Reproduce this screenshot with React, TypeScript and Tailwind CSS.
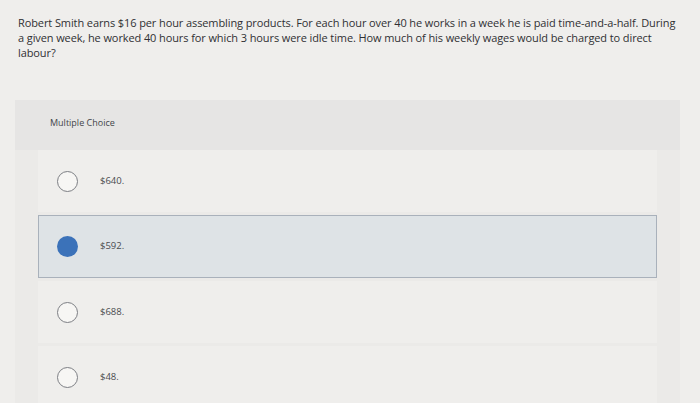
const options = [
  { label: '$640.', selected: false },
  { label: '$592.', selected: true },
  { label: '$688.', selected: false },
  { label: '$48.', selected: false },
]

function Radio({ selected }: { selected: boolean }) {
  if (selected) {
    return <span className="block h-[21px] w-[21px] shrink-0 rounded-full bg-[#3b72b9]" />
  }
  return (
    <span className="block h-[21px] w-[21px] shrink-0 rounded-full border border-[#7d7f84] bg-[#f7f6f4]" />
  )
}

export default function App() {
  return (
    <div
      className="h-[403px] w-[700px] overflow-hidden bg-[#efeeec] text-[#2f3033]"
      style={{ fontFamily: '"Open Sans", "Liberation Sans", sans-serif' }}
    >
      <div className="whitespace-nowrap px-[18px] pt-[15px] text-[11px] leading-[15px] tracking-[-0.1px]">
        Robert Smith earns $16 per hour assembling products. For each hour over 40 he works in a week he is paid
        time-and-a-half. During
        <br />
        a given week, he worked 40 hours for which 3 hours were idle time. How much of his weekly wages would be
        charged to direct
        <br />
        labour?
      </div>

      <div className="ml-[15px] mr-[20px] mt-[40px] bg-[#e6e5e4]">
        <div className="h-[50px] pl-[35px] pt-[16px] text-[9px] text-[#44464a]">Multiple Choice</div>
        <div className="flex flex-col gap-[3px] bg-[#ebeae8] pb-2">
          {options.map((o) => (
            <div
              key={o.label}
              className={
                o.selected
                  ? 'mx-[23px] flex h-[63px] items-center border border-[#a9b1bb] bg-[#dee3e6] pl-[18px]'
                  : 'mx-[23px] flex h-[62px] items-center bg-[#efeeec] pl-[19px]'
              }
            >
              <Radio selected={o.selected} />
              <span className="ml-[22px] text-[9.5px] text-[#4a4c50]">{o.label}</span>
            </div>
          ))}
        </div>
      </div>
    </div>
  )
}
